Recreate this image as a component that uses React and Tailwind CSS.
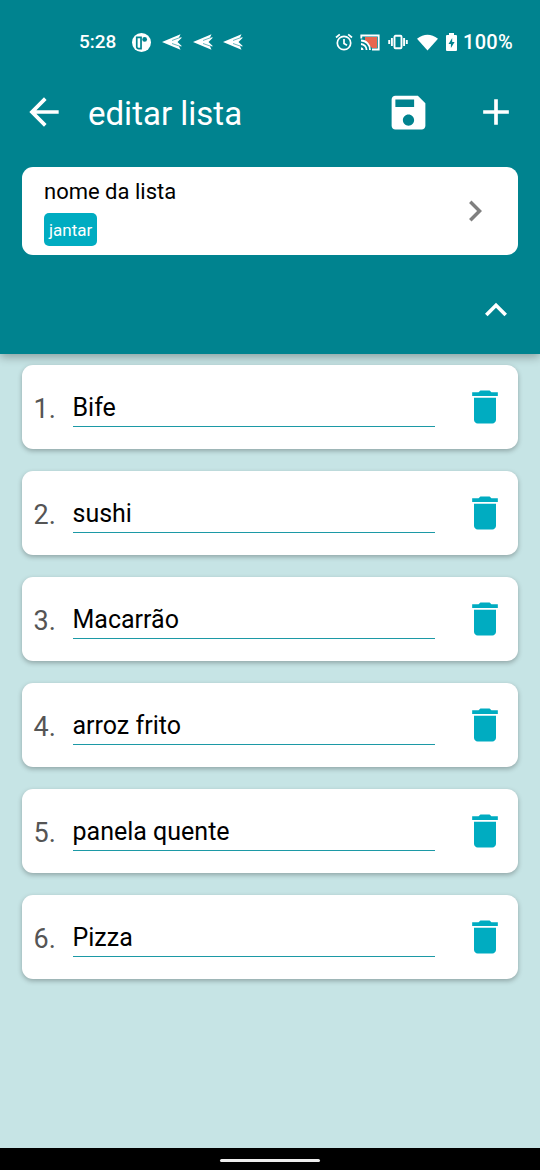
const items = ['Bife', 'sushi', 'Macarrão', 'arroz frito', 'panela quente', 'Pizza'];

const PATHS = {
  back: 'M20 11H7.83l5.59-5.59L12 4l-8 8 8 8 1.41-1.41L7.83 13H20v-2z',
  save: 'M17 3H5c-1.11 0-2 .9-2 2v14c0 1.1.89 2 2 2h14c1.1 0 2-.9 2-2V7l-4-4zm-5 16c-1.66 0-3-1.34-3-3s1.34-3 3-3 3 1.34 3 3-1.34 3-3 3zm3-10H5V5h10v4z',
  add: 'M19 13h-6v6h-2v-6H5v-2h6V5h2v6h6v2z',
  right: 'M10 6L8.59 7.41 13.17 12l-4.58 4.59L10 18l6-6z',
  up: 'M12 8l-6 6 1.41 1.41L12 10.83l4.59 4.58L18 14z',
  trash: 'M6 19c0 1.1.9 2 2 2h8c1.1 0 2-.9 2-2V7H6v12zM19 4h-3.5l-1-1h-5l-1 1H5v2h14V4z',
};

function Icon({ name, className }) {
  return (
    <svg viewBox="0 0 24 24" fill="currentColor" className={`shrink-0 ${className}`}>
      <path d={PATHS[name]} />
    </svg>
  );
}

function PlaneIcon() {
  return (
    <svg viewBox="0 0 20 16" className="h-4 w-5 shrink-0">
      <path d="M0 8L18.500 0.300L17 3.500L20 3.500L15.500 8L20 12.300L17 12.300L18.500 15.700Z" fill="#fff" />
      <path d="M10 6.500L18 3.500M10 9.500L18 12.300" stroke="#00838f" strokeWidth="0.600" fill="none" />
    </svg>
  );
}

function StatusBar() {
  return (
    <div className="flex h-[72px] items-center pt-3 text-white">
      <span className="ml-[79px] w-[53px] pt-px text-[19px] font-medium">5:28</span>
      <svg viewBox="0 0 20 20" className="size-[19px]">
        <circle cx="10" cy="10" r="10" fill="#fff" />
        <path d="M5 4.500h4.500v12h-2.500a2 2 0 0 1-2-2z" fill="none" stroke="#00838f" strokeWidth="1.800" />
        <circle cx="13.300" cy="6.800" r="2.500" fill="#00838f" />
      </svg>
      <div className="ml-[11px] flex gap-[10.500px]">
        <PlaneIcon />
        <PlaneIcon />
        <PlaneIcon />
      </div>
      <svg viewBox="0 0 18 18" className="ml-[92px] size-[18px]" fill="none" stroke="#fff" strokeWidth="1.700">
        <circle cx="9" cy="10" r="6.700" />
        <path d="M9 6v4.500l3 1.800M1 4.500L4.800 1.300M17 4.500L13.200 1.300" />
      </svg>
      <svg viewBox="0 0 20 17" className="ml-[7px] h-[17px] w-5" fill="none" stroke="#fff" strokeWidth="1.800">
        <path d="M5 3h12v11h-5L5 7z" fill="#e8664f" stroke="none" />
        <path d="M1.300 4.500V1.500h17.400v14H12" />
        <path d="M1 6.500a9 9 0 0 1 9 9.500M1 10a6 6 0 0 1 5.600 6" />
        <path d="M1 13.200a3 3 0 0 1 2.600 2.800H1z" fill="#fff" stroke="none" />
      </svg>
      <svg viewBox="0 0 20 16" className="ml-2 h-4 w-5" fill="none" stroke="#fff" strokeWidth="1.900">
        <rect x="6.500" y="1.800" width="7" height="12.400" rx="1" />
        <path d="M3.900 4v8M1.200 6v4M16.100 4v8M18.800 6v4" />
      </svg>
      <svg viewBox="0 0 22 17" className="ml-[9px] h-[17px] w-[21px]">
        <path d="M0 4.500Q11-3.500 22 4.500L11 17z" fill="#fff" />
      </svg>
      <svg viewBox="0 0 11 18" className="ml-[8px] h-[18px] w-[11px]">
        <path d="M3 0h5v2h2a1 1 0 0 1 1 1v14a1 1 0 0 1-1 1H1a1 1 0 0 1-1-1V3a1 1 0 0 1 1-1h2z" fill="#fff" />
        <path d="M6.200 5L2.500 11h2.400v4l3.700-6H6.200z" fill="#00838f" />
      </svg>
      <span className="ml-[6px] text-[20px] font-medium tracking-[0.3px]">100%</span>
    </div>
  );
}

function ItemRow({ index, name }) {
  return (
    <li className="flex h-[84px] items-center rounded-[11px] bg-white pr-[11px] pl-[11.5px] shadow-[0_2px_5px_rgba(0,0,0,0.28)]">
      <span className="w-[39px] pt-[4px] text-[27px] leading-8 text-[#555]">{index}.</span>
      <div className="mt-[1px] h-[39px] w-[362.5px] border-b border-[#1c99a6] text-[25px] leading-[39px] text-black">{name}</div>
      <Icon name="trash" className="ml-auto size-11 text-[#00acc1]" />
    </li>
  );
}

export default function App() {
  return (
    <div className="flex h-[1170px] w-[540px] flex-col overflow-hidden bg-[#c6e4e5] font-['Roboto',sans-serif]">
      <header className="h-[354px] shrink-0 bg-[#00838f] shadow-[0_3px_9px_rgba(0,0,0,0.3)]">
        <StatusBar />
        <div className="flex h-20 items-center pr-[22px] pl-[22px] text-white">
          <Icon name="back" className="size-[44px]" />
          <h1 className="ml-[22px] pt-[4px] text-[33px] leading-10">editar lista</h1>
          <Icon name="save" className="ml-auto size-[45px]" />
          <Icon name="add" className="ml-[43.5px] size-[44px]" />
        </div>
        <div className="mx-[22px] mt-[15px] flex h-[88px] items-center justify-between rounded-[11px] bg-white pr-[22px] pl-[22px]">
          <div className="flex flex-col items-start pt-px">
            <span className="text-[22px] leading-[30px] text-black">nome da lista</span>
            <span className="mt-[6px] flex h-[33px] items-center rounded-[5px] bg-[#00acc1] px-[5px] pt-[3px] text-[17px] text-white">jantar</span>
          </div>
          <Icon name="right" className="size-[42px] text-[#808080]" />
        </div>
        <div className="mt-[33px] flex justify-end pr-[22px]">
          <Icon name="up" className="size-11 text-white" />
        </div>
      </header>
      <ul className="flex grow flex-col gap-[22px] px-[22px] pt-[11px]">
        {items.map((name, i) => (
          <ItemRow key={name} index={i + 1} name={name} />
        ))}
      </ul>
      <div className="flex h-[22px] shrink-0 items-center justify-center bg-black pt-[2px]">
        <div className="h-[3px] w-[100px] rounded-full bg-[#eee]" />
      </div>
    </div>
  );
}
